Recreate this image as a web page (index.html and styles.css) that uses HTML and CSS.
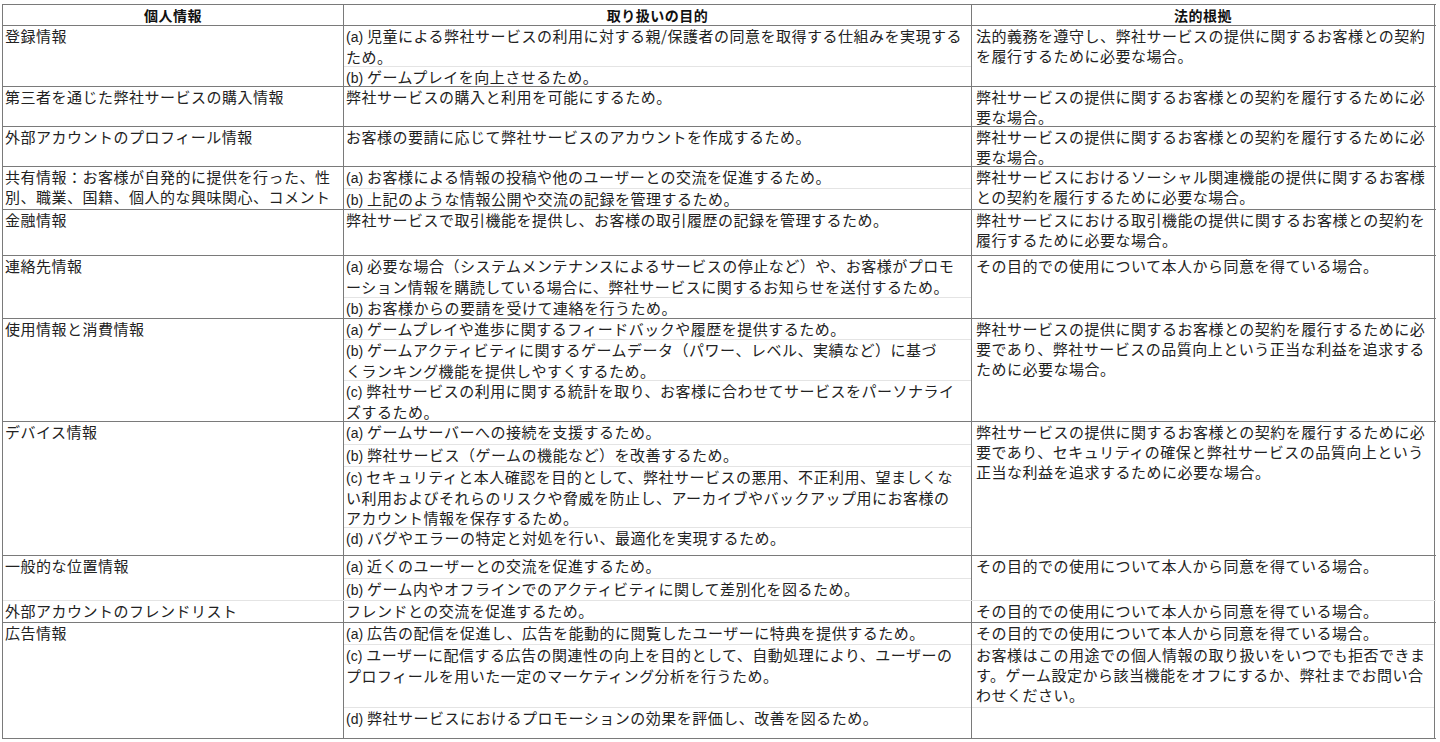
FILE: index.html
```html
<!DOCTYPE html>
<html lang="ja">
<head>
<meta charset="utf-8">
<title>個人情報の取り扱い</title>
<link rel="stylesheet" href="styles.css">
</head>
<body>
<div class="sheet">
  <div class="row head r21">
    <div class="cell c1">個人情報</div>
    <div class="cell c2">取り扱いの目的</div>
    <div class="cell c3">法的根拠</div>
  </div>

  <div class="row r61">
    <div class="cell c1">登録情報</div>
    <div class="cell c2">
      <div class="item s40"><span class="lbl">(a)</span> 児童による弊社サービスの利用に対する親/保護者の同意を取得する仕組みを実現する<br>ため。</div>
      <div class="item"><span class="lbl">(b)</span> ゲームプレイを向上させるため。</div>
    </div>
    <div class="cell c3"><div class="item">法的義務を遵守し、弊社サービスの提供に関するお客様との契約<br>を履行するために必要な場合。</div></div>
  </div>

  <div class="row r40">
    <div class="cell c1">第三者を通じた弊社サービスの購入情報</div>
    <div class="cell c2"><div class="item">弊社サービスの購入と利用を可能にするため。</div></div>
    <div class="cell c3"><div class="item">弊社サービスの提供に関するお客様との契約を履行するために必<br>要な場合。</div></div>
  </div>

  <div class="row r40">
    <div class="cell c1">外部アカウントのプロフィール情報</div>
    <div class="cell c2"><div class="item">お客様の要請に応じて弊社サービスのアカウントを作成するため。</div></div>
    <div class="cell c3"><div class="item">弊社サービスの提供に関するお客様との契約を履行するために必<br>要な場合。</div></div>
  </div>

  <div class="row r43">
    <div class="cell c1">共有情報：お客様が自発的に提供を行った、性<br>別、職業、国籍、個人的な興味関心、コメント</div>
    <div class="cell c2">
      <div class="item s21"><span class="lbl">(a)</span> お客様による情報の投稿や他のユーザーとの交流を促進するため。</div>
      <div class="item"><span class="lbl">(b)</span> 上記のような情報公開や交流の記録を管理するため。</div>
    </div>
    <div class="cell c3"><div class="item">弊社サービスにおけるソーシャル関連機能の提供に関するお客様<br>との契約を履行するために必要な場合。</div></div>
  </div>

  <div class="row r46">
    <div class="cell c1">金融情報</div>
    <div class="cell c2"><div class="item">弊社サービスで取引機能を提供し、お客様の取引履歴の記録を管理するため。</div></div>
    <div class="cell c3"><div class="item">弊社サービスにおける取引機能の提供に関するお客様との契約を<br>履行するために必要な場合。</div></div>
  </div>

  <div class="row r63">
    <div class="cell c1">連絡先情報</div>
    <div class="cell c2">
      <div class="item s41"><span class="lbl">(a)</span> 必要な場合（システムメンテナンスによるサービスの停止など）や、お客様がプロモ<br>ーション情報を購読している場合に、弊社サービスに関するお知らせを送付するため。</div>
      <div class="item"><span class="lbl">(b)</span> お客様からの要請を受けて連絡を行うため。</div>
    </div>
    <div class="cell c3"><div class="item">その目的での使用について本人から同意を得ている場合。</div></div>
  </div>

  <div class="row r103">
    <div class="cell c1">使用情報と消費情報</div>
    <div class="cell c2">
      <div class="item s20"><span class="lbl">(a)</span> ゲームプレイや進歩に関するフィードバックや履歴を提供するため。</div>
      <div class="item s41"><span class="lbl">(b)</span> ゲームアクティビティに関するゲームデータ（パワー、レベル、実績など）に基づ<br>くランキング機能を提供しやすくするため。</div>
      <div class="item"><span class="lbl">(c)</span> 弊社サービスの利用に関する統計を取り、お客様に合わせてサービスをパーソナライ<br>ズするため。</div>
    </div>
    <div class="cell c3"><div class="item">弊社サービスの提供に関するお客様との契約を履行するために必<br>要であり、弊社サービスの品質向上という正当な利益を追求する<br>ために必要な場合。</div></div>
  </div>

  <div class="row r134">
    <div class="cell c1">デバイス情報</div>
    <div class="cell c2">
      <div class="item s22"><span class="lbl">(a)</span> ゲームサーバーへの接続を支援するため。</div>
      <div class="item s22"><span class="lbl">(b)</span> 弊社サービス（ゲームの機能など）を改善するため。</div>
      <div class="item s61"><span class="lbl">(c)</span> セキュリティと本人確認を目的として、弊社サービスの悪用、不正利用、望ましくな<br>い利用およびそれらのリスクや脅威を防止し、アーカイブやバックアップ用にお客様の<br>アカウント情報を保存するため。</div>
      <div class="item"><span class="lbl">(d)</span> バグやエラーの特定と対処を行い、最適化を実現するため。</div>
    </div>
    <div class="cell c3"><div class="item">弊社サービスの提供に関するお客様との契約を履行するために必<br>要であり、セキュリティの確保と弊社サービスの品質向上という<br>正当な利益を追求するために必要な場合。</div></div>
  </div>

  <div class="row r45 soft">
    <div class="cell c1">一般的な位置情報</div>
    <div class="cell c2">
      <div class="item s22"><span class="lbl">(a)</span> 近くのユーザーとの交流を促進するため。</div>
      <div class="item"><span class="lbl">(b)</span> ゲーム内やオフラインでのアクティビティに関して差別化を図るため。</div>
    </div>
    <div class="cell c3"><div class="item">その目的での使用について本人から同意を得ている場合。</div></div>
  </div>

  <div class="row r22">
    <div class="cell c1">外部アカウントのフレンドリスト</div>
    <div class="cell c2"><div class="item">フレンドとの交流を促進するため。</div></div>
    <div class="cell c3"><div class="item">その目的での使用について本人から同意を得ている場合。</div></div>
  </div>

  <div class="row r116">
    <div class="cell c1">広告情報</div>
    <div class="cell c2">
      <div class="item s21"><span class="lbl">(a)</span> 広告の配信を促進し、広告を能動的に閲覧したユーザーに特典を提供するため。</div>
      <div class="item s63"><span class="lbl">(c)</span> ユーザーに配信する広告の関連性の向上を目的として、自動処理により、ユーザーの<br>プロフィールを用いた一定のマーケティング分析を行うため。</div>
      <div class="item"><span class="lbl">(d)</span> 弊社サービスにおけるプロモーションの効果を評価し、改善を図るため。</div>
    </div>
    <div class="cell c3">
      <div class="item s21">その目的での使用について本人から同意を得ている場合。</div>
      <div class="item s63">お客様はこの用途での個人情報の取り扱いをいつでも拒否できま<br>す。ゲーム設定から該当機能をオフにするか、弊社までお問い合<br>わせください。</div>
      <div class="item"></div>
    </div>
  </div>
</div>
</body>
</html>
```

FILE: styles.css
```css
html, body {
  margin: 0;
  padding: 0;
  background: #ffffff;
}

body {
  font-family: "Noto Sans CJK JP", "Noto Sans", sans-serif;
  font-size: 15px;
  letter-spacing: 0.5px;
  color: #222222;
}

.sheet {
  margin: 4px 0 0 2px;
  width: 1433px;
  border-left: 1px solid #7a7a7a;
  border-top: 1px solid #7a7a7a;
}

.row {
  display: grid;
  grid-template-columns: 341px 628px 463px;
  border-bottom: 1px solid #7a7a7a;
  box-sizing: border-box;
}

.row.soft {
  border-bottom-color: #e4e4e4;
}

.cell {
  border-right: 1px solid #7a7a7a;
  display: flex;
  flex-direction: column;
  line-height: 20px;
  white-space: nowrap;
  overflow: hidden;
}

.c1 {
  padding-left: 2px;
}

.item {
  flex-shrink: 0;
  padding-left: 2px;
  box-sizing: border-box;
}

.c3 .item {
  padding-left: 4px;
}

.item:last-child {
  flex: 1;
}

.item + .item {
  border-top: 1px solid #e4e4e4;
}

.lbl {
  font-family: "Liberation Sans Narrow", "Liberation Sans", sans-serif;
  font-size: 14px;
  letter-spacing: 0;
}

.head .cell {
  justify-content: center;
  align-items: center;
  font-weight: bold;
  font-size: 14px;
  color: #111111;
  padding: 0;
}

.r21 { height: 21px; }
.r22 { height: 22px; }
.r40 { height: 40px; }
.r43 { height: 43px; }
.r45 { height: 45px; }
.r46 { height: 46px; }
.r61 { height: 61px; }
.r63 { height: 63px; }
.r103 { height: 103px; }
.r116 { height: 116px; }
.r134 { height: 134px; }

.s20 { height: 20px; }
.s21 { height: 21px; }
.s22 { height: 22px; }
.s40 { height: 40px; }
.s41 { height: 41px; }
.s42 { height: 42px; }
.s61 { height: 61px; }
.s63 { height: 63px; }
```
